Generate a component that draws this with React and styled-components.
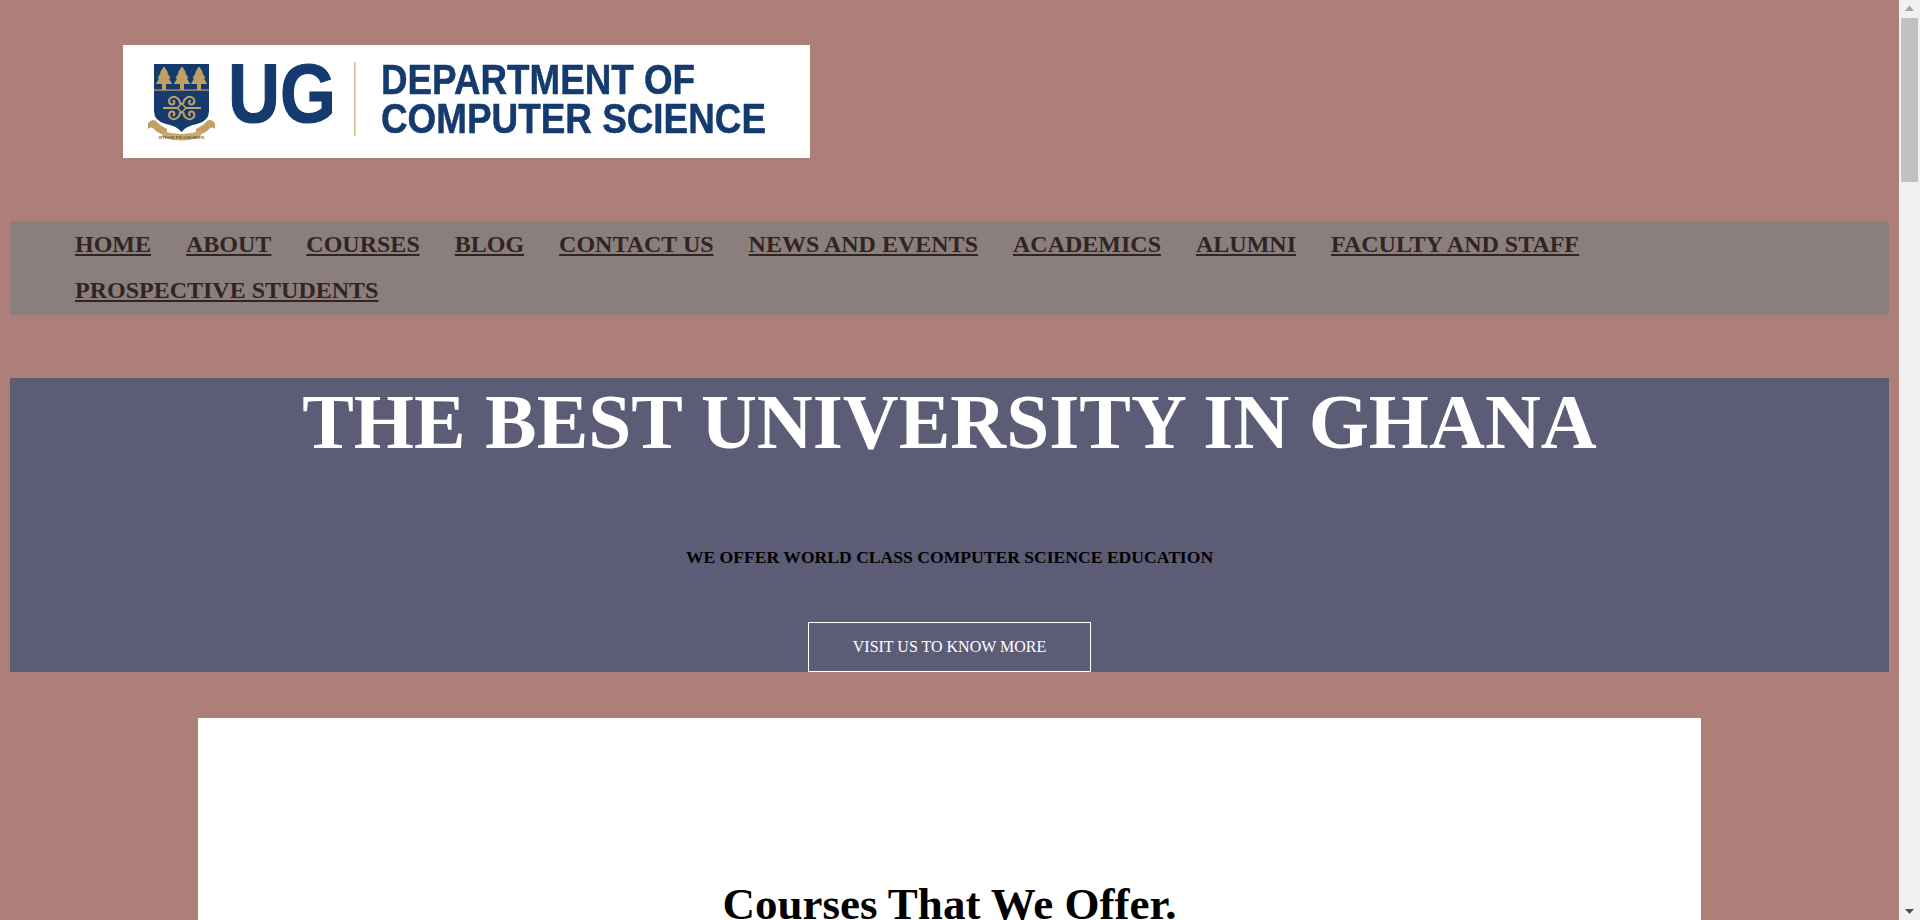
import React from "react";
import styled, { createGlobalStyle } from "styled-components";

const NAV_LINKS = [
  "HOME",
  "ABOUT",
  "COURSES",
  "BLOG",
  "CONTACT US",
  "NEWS AND EVENTS",
  "ACADEMICS",
  "ALUMNI",
  "FACULTY AND STAFF",
  "PROSPECTIVE STUDENTS",
];

const GOLD = "#c2a063";
const NAVY = "#143a6e";
const LOGO_FONT = "'Liberation Sans', Arial, sans-serif";

const GlobalStyle = createGlobalStyle`
  body {
    margin: 8px 31px 8px 10px;
    background-color: #ae7f79;
    font-family: "Liberation Serif", "Times New Roman", serif;
  }
`;

const Header = styled.header`
  padding: 37px 0 63px 113px;
`;

const LogoBox = styled.div`
  width: 687px;
  height: 113px;
  background-color: white;
  svg {
    display: block;
    filter: blur(0.5px);
  }
`;

const Nav = styled.nav`
  background-color: #8a7f7c;
  margin-bottom: 63px;
  padding-bottom: 2px;
`;

const NavList = styled.ul`
  display: flex;
  flex-wrap: wrap;
  column-gap: 35px;
  list-style: none;
  margin: 0;
  padding: 0 0 0 65px;
`;

const NavLink = styled.a`
  display: block;
  font-size: 24px;
  font-weight: bold;
  line-height: 46px;
  color: #332424;
  text-decoration: underline;
`;

const Hero = styled.section`
  display: flex;
  flex-direction: column;
  align-items: center;
  height: 294px;
  background-color: #5c5c77;
  text-align: center;
`;

const HeroTitle = styled.h1`
  margin: 2px 0 0;
  font-size: 77.4px;
  line-height: 85px;
  font-weight: bold;
  color: white;
`;

const HeroText = styled.p`
  margin: 82px 0 0;
  font-size: 17.6px;
  line-height: 21px;
  font-weight: bold;
  color: black;
`;

const HeroButton = styled.a`
  display: block;
  box-sizing: border-box;
  width: 283px;
  height: 50px;
  margin-top: 54px;
  border: 1px solid white;
  font-size: 16px;
  line-height: 48px;
  color: white;
  text-decoration: none;
`;

const Card = styled.section`
  width: 1503px;
  min-height: 4233px;
  margin: 46px auto 8px;
  padding-top: 160px;
  box-sizing: border-box;
  background-color: white;
  text-align: center;
`;

const CardTitle = styled.h1`
  margin: 0;
  font-size: 45px;
  line-height: 52px;
  font-weight: bold;
  color: black;
`;

const ScrollBar = styled.div`
  position: fixed;
  top: 0;
  right: 0;
  bottom: 0;
  width: 21px;
  display: flex;
  flex-direction: column;
  align-items: center;
  justify-content: space-between;
  background-color: #f1f1f1;
`;

const ScrollButton = styled.svg`
  display: block;
  flex: none;
`;

const ScrollThumb = styled.div`
  width: 17px;
  height: 164px;
  background-color: #c1c1c1;
`;

const ScrollTop = styled.div`
  display: flex;
  flex-direction: column;
  align-items: center;
`;

function Tree({ x }) {
  return (
    <path
      d={`M${x} 22L${x + 3.5} 27.5L${x + 2.5} 27.5L${x + 6} 33L${x + 4} 33L${x + 7.5} 38.5L${x + 1.5} 38.5V44.5H${x - 1.5}V38.5L${x - 7.5} 38.5L${x - 4} 33L${x - 6} 33L${x - 2.5} 27.5L${x - 3.5} 27.5Z`}
      fill={GOLD}
      stroke={GOLD}
      strokeWidth="1"
      strokeLinejoin="round"
    />
  );
}

function Spiral({ sx, sy }) {
  return (
    <path
      transform={`translate(58.7 63) scale(${sx} ${sy})`}
      d="M1.5 -4C2 -10 7 -12.5 10.5 -10.5C14 -8.5 13 -3.5 9.5 -3.5C7 -3.5 6.5 -7 9 -7.5"
    />
  );
}

function Logo() {
  return (
    <svg width="687" height="113" viewBox="0 0 687 113" aria-label="UG Department of Computer Science">
      {/* crest */}
      <path d="M31 19H86V66Q86 76 74 79Q63 81 58.5 87Q54 81 43 79Q31 76 31 66Z" fill={NAVY} />
      <rect x="31" y="44.5" width="55" height="1.2" fill={GOLD} />
      <Tree x={41} />
      <Tree x={59} />
      <Tree x={76} />
      <g fill="none" stroke={GOLD} strokeWidth="2">
        <Spiral sx={1} sy={1} />
        <Spiral sx={-1} sy={1} />
        <Spiral sx={1} sy={-1} />
        <Spiral sx={-1} sy={-1} />
        <path d="M40 63H78" strokeWidth="1.8" />
        <path d="M58.7 58.5L63 63L58.7 67.5L54.4 63Z" fill={NAVY} strokeWidth="1.6" />
      </g>
      {/* ribbon */}
      <path d="M25 78Q29 73 33 76Q36 80 44 84L44 91Q34 88 31 84Q28 81 25 84Z" fill={GOLD} />
      <path d="M92 78Q88 73 84 76Q81 80 73 84L73 91Q83 88 86 84Q89 81 92 84Z" fill={GOLD} />
      <path d="M40 86Q58 92 77 86L78 92Q58 99 39 92Z" fill="#c9ab70" />
      <text x="58.5" y="93.5" fontSize="4" textAnchor="middle" fill="#4a3a20" fontFamily={LOGO_FONT}>INTEGRI PROCEDAMUS</text>
      {/* wordmark */}
      <text x="105" y="77" fill={NAVY} stroke={NAVY} strokeWidth="1.2" fontFamily={LOGO_FONT} fontWeight="bold" fontSize="83" textLength="108" lengthAdjust="spacingAndGlyphs">UG</text>
      <rect x="231" y="17" width="1.5" height="74" fill="#cdb88c" />
      <text x="258" y="49" fill={NAVY} stroke={NAVY} strokeWidth="0.5" fontFamily={LOGO_FONT} fontWeight="bold" fontSize="42" textLength="314" lengthAdjust="spacingAndGlyphs">DEPARTMENT OF</text>
      <text x="258" y="88" fill={NAVY} stroke={NAVY} strokeWidth="0.5" fontFamily={LOGO_FONT} fontWeight="bold" fontSize="42" textLength="385" lengthAdjust="spacingAndGlyphs">COMPUTER SCIENCE</text>
    </svg>
  );
}

export default function App() {
  return (
    <>
      <GlobalStyle />
      <Header>
        <LogoBox>
          <Logo />
        </LogoBox>
      </Header>
      <Nav>
        <NavList>
          {NAV_LINKS.map((link) => (
            <li key={link}>
              <NavLink href="#">{link}</NavLink>
            </li>
          ))}
        </NavList>
      </Nav>
      <Hero>
        <HeroTitle>THE BEST UNIVERSITY IN GHANA</HeroTitle>
        <HeroText>WE OFFER WORLD CLASS COMPUTER SCIENCE EDUCATION</HeroText>
        <HeroButton href="#">VISIT US TO KNOW MORE</HeroButton>
      </Hero>
      <Card>
        <CardTitle>Courses That We Offer.</CardTitle>
      </Card>
      <ScrollBar>
        <ScrollTop>
          <ScrollButton width="21" height="18" viewBox="0 0 21 18">
            <path d="M10.5 5.5L15 11H6Z" fill="#a3a3a3" />
          </ScrollButton>
          <ScrollThumb />
        </ScrollTop>
        <ScrollButton width="21" height="18" viewBox="0 0 21 18">
          <path d="M10.5 12L15 7H6Z" fill="#505050" />
        </ScrollButton>
      </ScrollBar>
    </>
  );
}
